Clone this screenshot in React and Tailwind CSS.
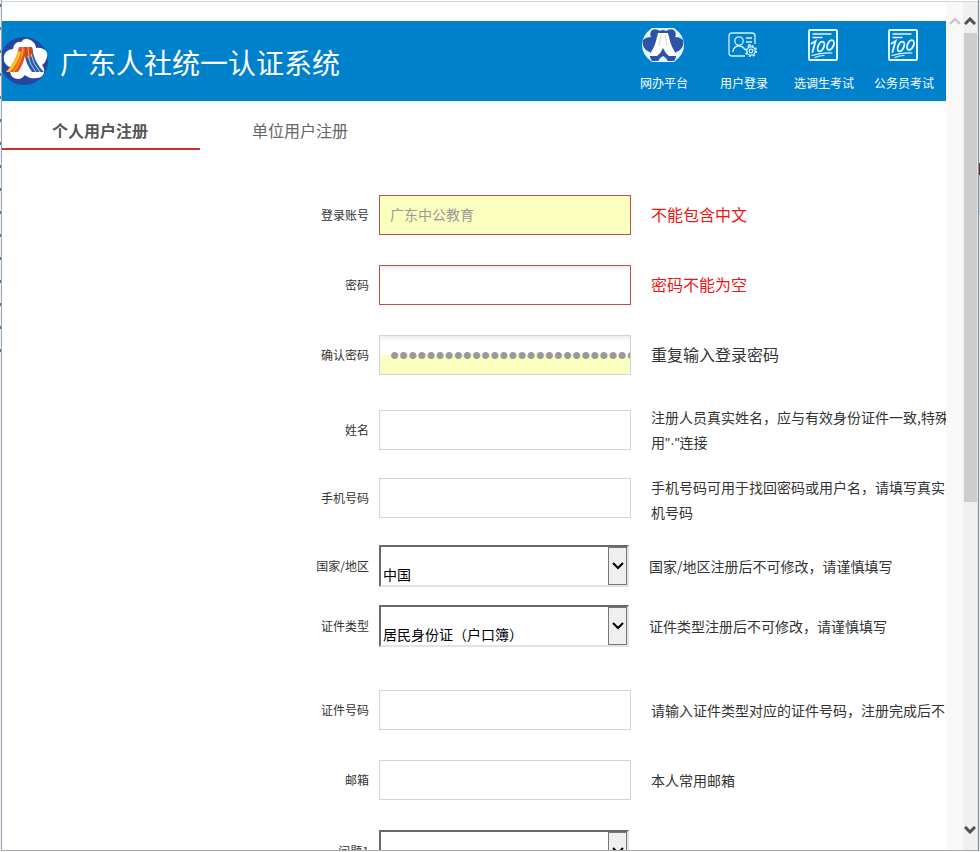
import React from "react";

const FONT = "font-['Noto_Sans_CJK_SC',sans-serif]";

function FlowerLogo() {
  return (
    <svg viewBox="0 0 46 50" className="h-[50px] w-[46px] shrink-0" aria-hidden="true">
      <circle cx="22" cy="25" r="24" fill="#23479f" />
      <path
        d="M13 8q3-3 6-2 3-4 7-3 4 1 7 5 1 3 1 4 5-1 9 2 3 3 2 7-1 5-5 8 3 4 2 8-2 5-7 5-6 1-9-1-3-2-3-2-2 3-6 4-6 0-8-4-2-4-1-8-4-1-6-6-1-6 2-9 3-3 7-3 0-3 2-5z"
        fill="#ffffff"
      />
      <path d="M17 11h7l-1 9q-2 9-7 16H4q10-10 13-25z" fill="#e2531f" />
      <path d="M16 15q-2 10-12 21h4q8-8 11-20z" fill="#fbc02d" />
      <path d="M21 13q-2 14-10 23" stroke="#f68b1f" strokeWidth="2" fill="none" />
      <path d="M24 11h6q2 16 12 25H30q-6-8-7-16z" fill="#2b5aa8" />
      <path d="M23 11h7l1 8-5 4-3-3z" fill="#c9472b" />
      <path d="M26 20q2 9 8 16M29 18q2 10 9 18" stroke="#b9d2ee" strokeWidth="1" fill="none" />
      <path d="M21 11l-1 9M26 11l1 11" stroke="#f6b23a" strokeWidth="1" fill="none" />
    </svg>
  );
}

function PlatformIcon() {
  return (
    <svg viewBox="0 0 42 34" className="h-[34px] w-[42px]" aria-hidden="true">
      <path d="M10 0h22q10 7 10 17t-10 17H10Q0 27 0 17T10 0z" fill="#e4f8ff" />
      <path
        d="M10 2q4-2 8 1 3-2 6 0 4-3 8-1 3 4 1 7 5 0 8 3 1 6-2 9-3 3-5 3 1 5-2 9H10q-3-4-2-9-2 0-5-3-3-3-2-9 3-3 8-3-2-3 1-7z"
        fill="#2d53a6"
      />
      <path d="M16 5h10l2 8q2 8 8 15h-9q-4-3-6-8-2 5-6 8H6q6-7 8-15z" fill="#ffffff" />
      <path d="M16 34q1-4 5-6 4 2 5 6z" fill="#e4f8ff" />
      <path d="M19 7l-2 11M23 7l2 11" stroke="#c3d0a0" strokeWidth=".8" fill="none" />
    </svg>
  );
}

function LoginIcon() {
  return (
    <svg viewBox="0 0 30 26" className="h-[26px] w-[30px]" fill="none" stroke="#d4f2ff" strokeWidth="1.300" aria-hidden="true">
      <path d="M17 24H4q-3 0-3-3V4q0-3 3-3h20q3 0 3 3v8" />
      <circle cx="11" cy="9" r="4.200" />
      <path d="M5 20v-1q1-5 6-5 4 0 6 4M18 6h6M18 10h6M20 13h3" />
      <circle cx="23" cy="19" r="4.200" />
      <circle cx="23" cy="19" r="1.800" />
      <circle cx="23" cy="19" r="5.200" strokeDasharray="2 2.080" strokeWidth="1.800" />
    </svg>
  );
}

function ExamIcon() {
  return (
    <svg viewBox="0 0 30 32" className="h-[32px] w-[30px]" fill="none" stroke="#e4f8ff" strokeWidth="1.900" strokeLinecap="round" aria-hidden="true">
      <rect x="1" y="1" width="28" height="30" rx="1" />
      <path d="M5 5h18M5 8.500h9" strokeWidth="1.300" />
      <path d="M3.500 14.500l4-2.500-3 11" />
      <ellipse cx="13" cy="17.500" rx="2.800" ry="5.200" transform="rotate(24 13 17.500)" />
      <ellipse cx="22.500" cy="16" rx="3" ry="5.200" transform="rotate(24 22.500 16)" />
      <path d="M4 26.500q9-3 20-2.500M7 28.500q4-1.800 9-2" strokeWidth="1.200" />
    </svg>
  );
}

function Chevron({ className, up = false, width = 2 }) {
  return (
    <svg viewBox="0 0 12 8" className={className} fill="none" stroke="currentColor" strokeWidth={width} aria-hidden="true">
      <path d={up ? "M1 7l5-5 5 5" : "M1 1l5 5 5-5"} />
    </svg>
  );
}

const NAV = [
  ["网办平台", PlatformIcon],
  ["用户登录", LoginIcon],
  ["选调生考试", ExamIcon],
  ["公务员考试", ExamIcon],
];

function Row({ id, label, hint, gap, hintClass = "text-sm text-[#333]", children }) {
  return (
    <div className={`flex items-center ${gap}`}>
      <label htmlFor={id} className="w-[367px] shrink-0 text-right text-xs text-[#333]">{label}</label>
      <div className="ml-[10px] shrink-0">{children}</div>
      {hint && <p className={`ml-5 shrink-0 whitespace-nowrap ${hintClass}`}>{hint}</p>}
    </div>
  );
}

function TextField({ className = "border-[#d4d4d4] bg-white text-sm", ...props }) {
  return <input className={`block h-10 w-[252px] border px-[10px] outline-none ${className}`} {...props} />;
}

function SelectField({ id, value }) {
  return (
    <div className="relative w-[250px]">
      <select
        id={id}
        className="block h-[42px] w-full appearance-none border-2 border-t-[#696969] border-r-[#e3e3e3] border-b-[#e3e3e3] border-l-[#696969] bg-white pt-4 pl-[2px] text-sm text-black outline-none"
      >
        <option>{value}</option>
      </select>
      <span className="pointer-events-none absolute top-[2px] right-[2px] bottom-[2px] flex w-[19px] items-center justify-center border border-[#777] bg-[#efefef] text-black">
        <Chevron className="h-2 w-3" />
      </span>
    </div>
  );
}

export default function App() {
  return (
    <div className={`flex h-screen overflow-hidden bg-white pb-px ${FONT}`}>
      <div className="flex w-[2px] shrink-0 flex-col gap-5 overflow-hidden border-r border-[#9aa5b5] bg-[#eef2f6] pt-1">
        {Array.from({ length: 16 }, (_, i) => (
          <span key={i} className="h-[3px] w-px shrink-0 bg-[#5f7389]" />
        ))}
      </div>

      <div className="mt-px flex min-w-0 flex-1 border-t border-b border-t-[#cfd6dc] border-b-[#a9a9a9]">
        <main className="min-w-0 flex-1 overflow-hidden pt-[19px]">
          <header className="flex h-20 items-center bg-[#0081cc] text-white">
            <FlowerLogo />
            <h1 className="ml-3 flex-1 pt-[2px] text-[28px] leading-10 whitespace-nowrap">广东人社统一认证系统</h1>
            <nav className="flex pr-[2px]">
              {NAV.map(([text, Icon]) => (
                <a key={text} href="#" className="flex w-20 flex-col items-center">
                  <span className="flex h-12 items-center pr-[2px]"><Icon /></span>
                  <span className="pt-1 pb-2 text-xs leading-5">{text}</span>
                </a>
              ))}
            </nav>
          </header>

          <div role="tablist" className="flex text-base text-[#666]">
            <button role="tab" aria-selected="true" className="h-[49px] w-[198px] border-b-2 border-[#c9302c] pt-[10px] pr-[2px] font-bold text-[#555]">
              个人用户注册
            </button>
            <button role="tab" aria-selected="false" className="h-[49px] w-[200px] border-b-2 border-transparent pt-[10px]">单位用户注册</button>
          </div>

          <form>
            <Row id="account" label="登录账号" hint="不能包含中文" gap="mt-[45px]" hintClass="pb-[2px] text-base text-[#f01414]">
              <TextField id="account" type="text" defaultValue="广东中公教育" className="border-[#c0504d] bg-[#faffbd] pb-[2px] text-sm text-[#999]" />
            </Row>
            <Row id="password" label="密码" hint="密码不能为空" gap="mt-[30px]" hintClass="pb-[2px] text-base text-[#f01414]">
              <TextField id="password" type="password" autoComplete="off" className="border-[#c0504d] bg-white text-sm shadow-[inset_0_3px_3px_#f0f0f0]" />
            </Row>
            <Row id="confirm" label="确认密码" hint="重复输入登录密码" gap="mt-[30px]" hintClass="pb-[2px] text-base text-[#333]">
              <TextField
                id="confirm"
                type="password"
                autoComplete="off"
                defaultValue="0123456789012345678901234567"
                className="border-[#d4d4d4] bg-linear-to-b from-white from-50% to-[#faffbd] to-50% pr-0 font-['Liberation_Sans',sans-serif] text-[26px] text-[#999] shadow-[inset_0_3px_3px_#f0f0f0]"
              />
            </Row>
            <Row
              id="name"
              label="姓名"
              gap="mt-[30px]"
              hintClass="text-sm/[25px] text-[#333]"
              hint={
                <>
                  注册人员真实姓名，应与有效身份证件一致,特殊
                  <br />
                  用<span className="font-['Liberation_Sans',sans-serif] leading-none">"·"</span>连接
                </>
              }
            >
              <TextField id="name" type="text" />
            </Row>
            <Row
              id="phone"
              label="手机号码"
              gap="mt-4"
              hintClass="pt-1 text-sm/[25px] text-[#333]"
              hint={<>手机号码可用于找回密码或用户名，请填写真实手<br />机号码</>}
            >
              <TextField id="phone" type="text" />
            </Row>
            <Row id="country" label="国家/地区" hint="国家/地区注册后不可修改，请谨慎填写" gap="mt-5">
              <SelectField id="country" value="中国" />
            </Row>
            <Row id="idtype" label="证件类型" hint="证件类型注册后不可修改，请谨慎填写" gap="mt-[18px]">
              <SelectField id="idtype" value="居民身份证（户口簿）" />
            </Row>
            <Row id="idno" label="证件号码" hint="请输入证件类型对应的证件号码，注册完成后不" gap="mt-[43px]">
              <TextField id="idno" type="text" />
            </Row>
            <Row id="email" label="邮箱" hint="本人常用邮箱" gap="mt-[30px]">
              <TextField id="email" type="text" />
            </Row>
            <Row id="question" label="问题1" gap="mt-[30px]">
              <SelectField id="question" value="" />
            </Row>
          </form>
        </main>

        <div className="flex w-[17px] shrink-0 justify-center bg-[#f8f8f8] pt-[15px] text-[#c4c4c4]">
          <Chevron up className="h-2 w-3" />
        </div>
        <div className="flex w-[15px] shrink-0 flex-col items-center border-r border-[#e4e4e4] bg-[#f0f0f0] text-[#505050]">
          <Chevron up width={3} className="mt-[15px] mb-2 h-2 w-3 shrink-0" />
          <div className="h-[469px] w-[13px] shrink-0 bg-[#cdcdcd]" />
          <div className="flex-1" />
          <Chevron width={3} className="mb-4 h-2 w-3 shrink-0" />
        </div>
      </div>
      <div className="w-[2px] shrink-0 border-l border-[#8f8f8f] bg-[#e4ebf2] pt-[163px]">
        <div className="h-3 bg-[#5a3038]" />
        <div className="h-10 bg-[#bcd3ea]" />
      </div>
    </div>
  );
}
